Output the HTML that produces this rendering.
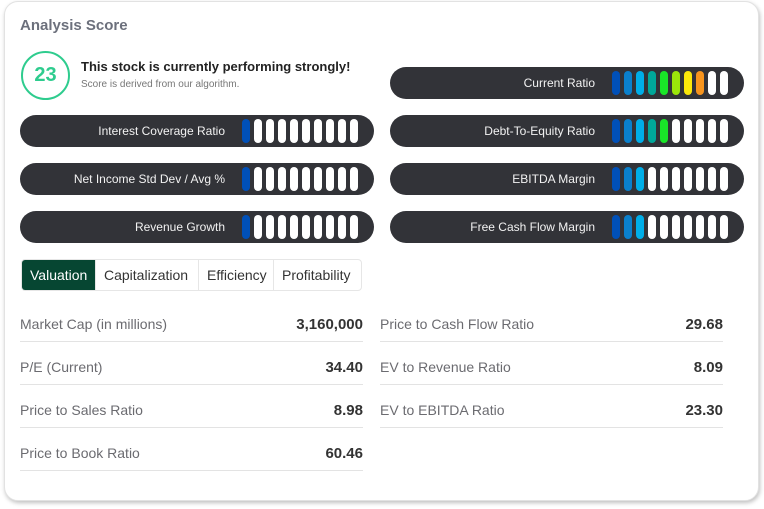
<!DOCTYPE html><html><head><style>
body{margin:0;width:764px;height:509px;background:#fff;font-family:"Liberation Sans",sans-serif;position:relative;overflow:hidden}
.card{position:absolute;left:4px;top:1px;width:753px;height:498px;border:1px solid #e2e2e2;border-radius:14px;box-shadow:1px 2px 4px rgba(0,0,0,.25);background:#fff}
.a{position:absolute}
.pill{position:absolute;width:354px;height:32px;border-radius:16px;background:#323338}
.pill .l{position:absolute;right:149px;top:9px;font-size:12px;color:#f2f2f2;white-space:nowrap}
.bars{position:absolute;left:222px;top:4px;display:flex;gap:4px}
.bars i{display:block;width:8px;height:24px;border-radius:4px;background:#fff}
.tabs{position:absolute;left:21px;top:259px;height:30px;display:flex;border:1px solid #e6e6e6;border-radius:4px;overflow:hidden}
.tabs div{padding:0 8px;line-height:30px;font-size:14px;color:#333;border-right:1px solid #e6e6e6}
.row{position:absolute;width:343px;height:42px;border-bottom:1px solid #e3e3e3;font-size:14px}
.row span{position:absolute;left:0;top:17px;color:#6b6b70}
.row b{position:absolute;right:0;top:17px;color:#333;font-size:15px}
</style></head><body>
<div class="card"></div>
<div class="a" style="left:20px;top:17px;font-size:15px;font-weight:bold;color:#6c707c">Analysis Score</div>
<div class="a" style="left:21px;top:51px;width:45px;height:45px;border:2px solid #2ecc8e;border-radius:50%;text-align:center;line-height:45px;font-size:20px;font-weight:bold;color:#2ecc8e">23</div>
<div class="a" style="left:81px;top:59px;font-size:13px;font-weight:bold;color:#222">This stock is currently performing strongly!</div>
<div class="a" style="left:81px;top:79px;font-size:10px;color:#777">Score is derived from our algorithm.</div>

<div class="pill" style="left:390px;top:67px"><div class="l">Current Ratio</div><div class="bars"><i style="background:#0050b8"></i><i style="background:#0a80cc"></i><i style="background:#00aee8"></i><i style="background:#00a89a"></i><i style="background:#19e628"></i><i style="background:#9be60a"></i><i style="background:#fbe80a"></i><i style="background:#f7941d"></i><i></i><i></i></div></div>
<div class="pill" style="left:20px;top:115px"><div class="l">Interest Coverage Ratio</div><div class="bars"><i style="background:#0050b8"></i><i></i><i></i><i></i><i></i><i></i><i></i><i></i><i></i><i></i></div></div>
<div class="pill" style="left:390px;top:115px"><div class="l">Debt-To-Equity Ratio</div><div class="bars"><i style="background:#0050b8"></i><i style="background:#0a80cc"></i><i style="background:#00aee8"></i><i style="background:#00a89a"></i><i style="background:#19e628"></i><i></i><i></i><i></i><i></i><i></i></div></div>
<div class="pill" style="left:20px;top:163px"><div class="l">Net Income Std Dev / Avg %</div><div class="bars"><i style="background:#0050b8"></i><i></i><i></i><i></i><i></i><i></i><i></i><i></i><i></i><i></i></div></div>
<div class="pill" style="left:390px;top:163px"><div class="l">EBITDA Margin</div><div class="bars"><i style="background:#0050b8"></i><i style="background:#0a80cc"></i><i style="background:#00aee8"></i><i></i><i></i><i></i><i></i><i></i><i></i><i></i></div></div>
<div class="pill" style="left:20px;top:211px"><div class="l">Revenue Growth</div><div class="bars"><i style="background:#0050b8"></i><i></i><i></i><i></i><i></i><i></i><i></i><i></i><i></i><i></i></div></div>
<div class="pill" style="left:390px;top:211px"><div class="l">Free Cash Flow Margin</div><div class="bars"><i style="background:#0050b8"></i><i style="background:#0a80cc"></i><i style="background:#00aee8"></i><i></i><i></i><i></i><i></i><i></i><i></i><i></i></div></div>

<div class="tabs"><div style="background:#064632;color:#fff;width:57px">Valuation</div><div style="width:86px">Capitalization</div><div style="width:58px">Efficiency</div><div style="width:71px;border-right:0">Profitability</div></div>

<div class="row" style="left:20px;top:299px"><span>Market Cap (in millions)</span><b>3,160,000</b></div>
<div class="row" style="left:20px;top:342px"><span>P/E (Current)</span><b>34.40</b></div>
<div class="row" style="left:20px;top:385px"><span>Price to Sales Ratio</span><b>8.98</b></div>
<div class="row" style="left:20px;top:428px"><span>Price to Book Ratio</span><b>60.46</b></div>
<div class="row" style="left:380px;top:299px"><span>Price to Cash Flow Ratio</span><b>29.68</b></div>
<div class="row" style="left:380px;top:342px"><span>EV to Revenue Ratio</span><b>8.09</b></div>
<div class="row" style="left:380px;top:385px"><span>EV to EBITDA Ratio</span><b>23.30</b></div>
</body></html>
